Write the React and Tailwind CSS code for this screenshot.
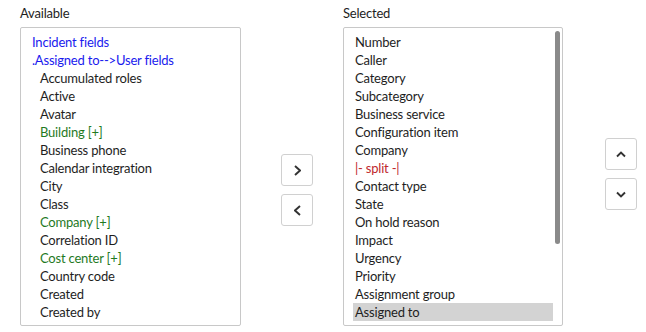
const available = [
    { label: "Incident fields", kind: "group" },
    { label: ".Assigned to-->User fields", kind: "group" },
    { label: "Accumulated roles" },
    { label: "Active" },
    { label: "Avatar" },
    { label: "Building [+]", kind: "ref" },
    { label: "Business phone" },
    { label: "Calendar integration" },
    { label: "City" },
    { label: "Class" },
    { label: "Company [+]", kind: "ref" },
    { label: "Correlation ID" },
    { label: "Cost center [+]", kind: "ref" },
    { label: "Country code" },
    { label: "Created" },
    { label: "Created by" },
    { label: "Date format" },
];

const selected = [
    "Number",
    "Caller",
    "Category",
    "Subcategory",
    "Business service",
    "Configuration item",
    "Company",
    "|- split -|",
    "Contact type",
    "State",
    "On hold reason",
    "Impact",
    "Urgency",
    "Priority",
    "Assignment group",
    "Assigned to",
    "Assignment date",
];

function Chevron({ dir }) {
    const points = {
        right: "1,1 6,5.5 1,10",
        left: "6,1 1,5.5 6,10",
        up: "1,5.5 5,1.5 9,5.5",
        down: "1,1.5 5,5.5 9,1.5",
    }[dir];
    const wide = dir === "up" || dir === "down";
    return (
        <svg
            width={wide ? 10 : 7}
            height={wide ? 7 : 11}
            viewBox={wide ? "0 0 10 7" : "0 0 7 11"}
            fill="none"
            stroke="#333"
            strokeWidth="1.9"
        >
            <polyline points={points} />
        </svg>
    );
}

function IconButton({ dir }) {
    return (
        <button className="w-[32px] h-[32px] flex items-center justify-center border border-[#d0d0d0] rounded-[3px] bg-white">
            <Chevron dir={dir} />
        </button>
    );
}

function App() {
    return (
        <div
            className="w-[646px] h-[332px] bg-white text-[13px] text-[#1e1e1e] tracking-[-0.2px] overflow-hidden flex pl-[20px] pt-[4px]"
            style={{ fontFamily: "Lato, 'Liberation Sans', sans-serif" }}
        >
            <div className="flex flex-col w-[221px]">
                <div className="h-[18px] leading-[18px] mb-[5px]">Available</div>
                <div className="h-[299px] border border-[#c8c8c8] rounded-[2px] overflow-hidden pt-[5px] pl-[11px]">
                    {available.map((item) => (
                        <div
                            key={item.label}
                            className={
                                item.kind === "group"
                                    ? "h-[18px] leading-[18px] text-[#1a1aee]"
                                    : item.kind === "ref"
                                    ? "h-[18px] leading-[18px] pl-[8px] text-[#1f7a1f]"
                                    : "h-[18px] leading-[18px] pl-[8px]"
                            }
                        >
                            {item.label}
                        </div>
                    ))}
                </div>
            </div>

            <div className="flex flex-col gap-[8px] pt-[150px] ml-[40px]">
                <IconButton dir="right" />
                <IconButton dir="left" />
            </div>

            <div className="flex flex-col w-[220px] ml-[30px]">
                <div className="h-[18px] leading-[18px] mb-[5px]">Selected</div>
                <div className="relative h-[299px] border border-[#c8c8c8] rounded-[2px] overflow-hidden pt-[5px] pl-[9px] pr-[8px]">
                    {selected.map((item) => (
                        <div
                            key={item}
                            className={
                                item === "Assigned to"
                                    ? "h-[18px] leading-[18px] pl-[2px] bg-[#d3d3d3] mr-[1px]"
                                    : item.startsWith("|-")
                                    ? "h-[18px] leading-[18px] pl-[2px] text-[#c0282d]"
                                    : "h-[18px] leading-[18px] pl-[2px]"
                            }
                        >
                            {item}
                        </div>
                    ))}
                    <div className="absolute right-[2px] top-[3px] w-[5px] h-[213px] rounded-full bg-[#8a8a8a]" />
                </div>
            </div>

            <div className="flex flex-col gap-[8px] pt-[134px] ml-[42px]">
                <IconButton dir="up" />
                <IconButton dir="down" />
            </div>
        </div>
    );
}

export default App;
